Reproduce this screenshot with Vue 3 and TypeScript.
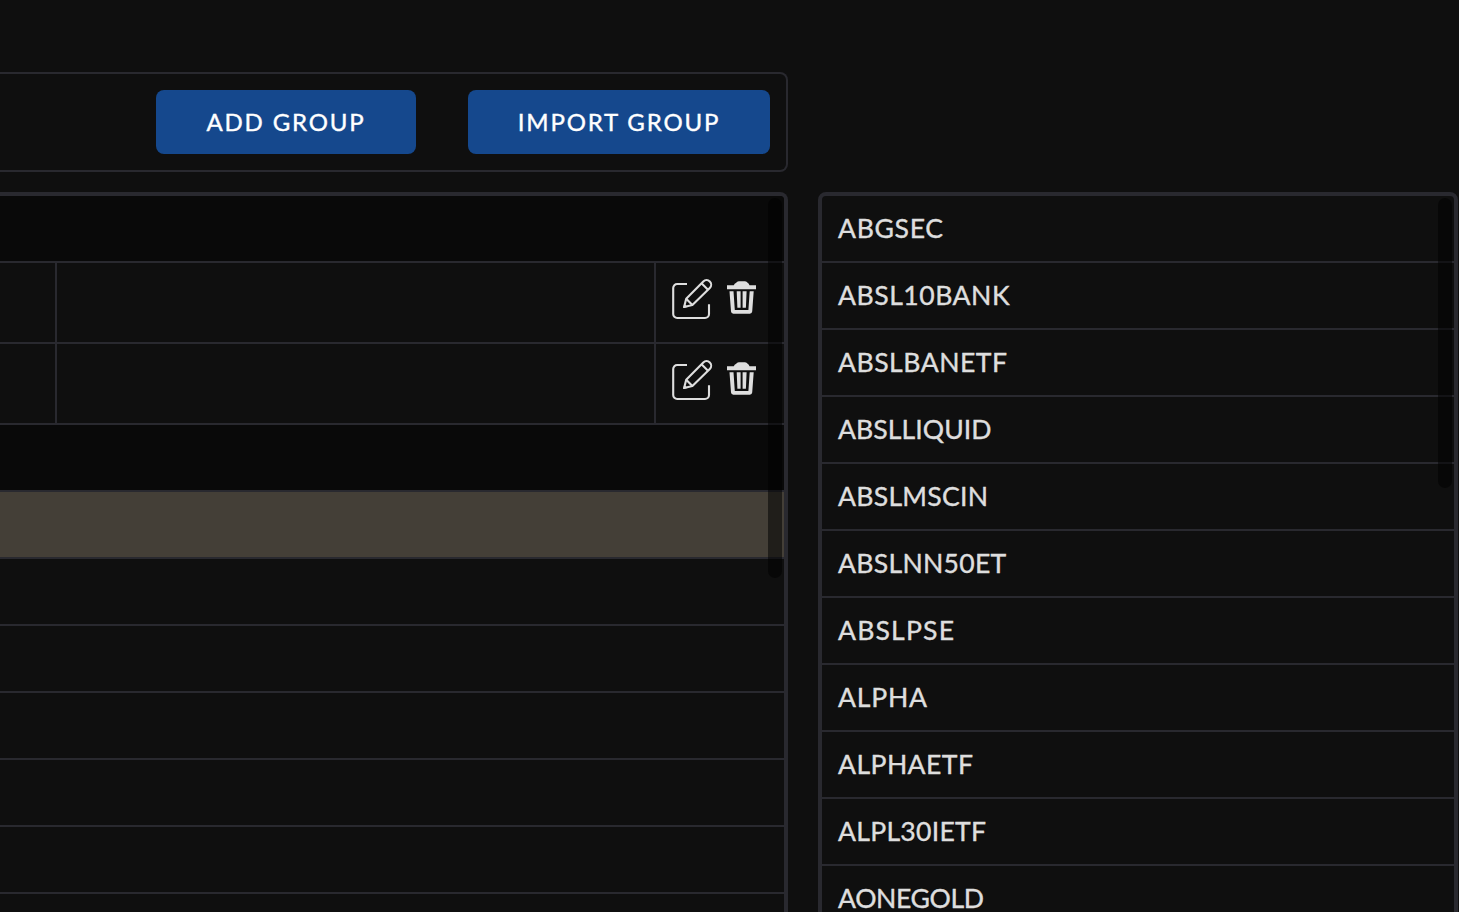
<script setup lang="ts">
interface Item { name: string; width: number }
interface Row { kind: 'header' | 'group' | 'selected' | 'plain' }

const symbols: Item[] = [
  { name: 'ABGSEC', width: 105 },
  { name: 'ABSL10BANK', width: 171.5 },
  { name: 'ABSLBANETF', width: 169 },
  { name: 'ABSLLIQUID', width: 153.5 },
  { name: 'ABSLMSCIN', width: 150 },
  { name: 'ABSLNN50ET', width: 168.3 },
  { name: 'ABSLPSE', width: 116 },
  { name: 'ALPHA', width: 89 },
  { name: 'ALPHAETF', width: 135 },
  { name: 'ALPL30IETF', width: 148 },
  { name: 'AONEGOLD', width: 146 },
]

const rows: Row[] = [
  { kind: 'header' },
  { kind: 'group' },
  { kind: 'group' },
  { kind: 'header' },
  { kind: 'selected' },
  { kind: 'plain' },
  { kind: 'plain' },
  { kind: 'plain' },
  { kind: 'plain' },
  { kind: 'plain' },
  { kind: 'plain' },
]
</script>

<template>
  <main class="page">
    <section class="left">
      <header class="toolbar">
        <button class="btn add">ADD GROUP</button>
        <button class="btn import">IMPORT GROUP</button>
      </header>
      <div class="panel groups">
        <div v-for="(row, i) in rows" :key="i" class="row" :class="row.kind">
          <template v-if="row.kind === 'group'">
            <div class="cell first"></div>
            <div class="cell middle"></div>
            <div class="cell actions">
              <svg class="edit" width="42" height="42" viewBox="0 0 42 42" fill="none" stroke="#dedede" stroke-width="2.1" stroke-linecap="butt" stroke-linejoin="round">
                <path d="M15 6H5.2A4 4 0 0 0 1.2 10V36A4 4 0 0 0 5.2 40H33A4 4 0 0 0 37 36V26.3" />
                <path d="M12.1 29L14.2 20.7L31.3 3.5A4.55 4.55 0 0 1 37.8 10L20.4 27.1Z" />
                <path d="M14.2 20.7L20.4 27.1M29.5 5.3L36 11.8" />
                <path d="M11.2 30.1L12.3 25.6L15.6 28.9Z" fill="#dedede" stroke="none" />
              </svg>
              <svg class="trash" width="29" height="33" viewBox="0 0 29 33" fill="#dedede">
                <path d="M0 4.2H6.8Q7.4 2.4 9.2 1.8Q10 0.2 11.8 0.2H18Q19.8 0.2 20.6 1.8Q22 2.4 22.5 4.2H29V8.2H0Z" />
                <path d="M2.5 10.2H6.5L7.8 28.9H21.4L22.7 10.2H26.7L25.2 30.6Q25 32.7 22.9 32.7H6.3Q4.2 32.7 4 30.6Z" />
                <path d="M9.7 10.2H13.6V26.8H10.4ZM15.6 10.2H19.6L18.9 26.8H15.6Z" />
              </svg>
            </div>
          </template>
        </div>
        <div class="thumb left-thumb"></div>
      </div>
    </section>
    <section class="panel symbols">
      <div v-for="item in symbols" :key="item.name" class="row symbol">
        <svg class="label" width="200" height="32" :aria-label="item.name">
          <text x="0" y="29" :textLength="item.width">{{ item.name }}</text>
        </svg>
      </div>
      <div class="thumb right-thumb"></div>
    </section>
  </main>
</template>

<style>
body { background: #0f0f0f; overflow: hidden; }
</style>

<style scoped>
.page {
  box-sizing: border-box;
  width: 1459px;
  height: 912px;
  padding-top: 72px;
  display: flex;
  align-items: flex-start;
  overflow: hidden;
  background: #0f0f0f;
  color: #dedede;
  font-family: Lato, "Liberation Sans", sans-serif;
}
.left { width: 788px; }
.toolbar {
  box-sizing: border-box;
  height: 100px;
  margin-bottom: 20px;
  padding-right: 16px;
  border: 2px solid #29292f;
  border-left: 0;
  border-radius: 0 8px 8px 0;
  display: flex;
  justify-content: flex-end;
  align-items: center;
  gap: 52px;
}
.btn {
  height: 64px;
  padding: 0;
  border: 0;
  border-radius: 8px;
  background: #15488d;
  color: #fff;
  font: 400 24px/64px Lato, "Liberation Sans", sans-serif;
  letter-spacing: 1.85px;
  white-space: nowrap;
  -webkit-text-stroke: 0.4px #fff;
}
.add { width: 260px; }
.import { width: 302px; }
.panel {
  box-sizing: border-box;
  position: relative;
  height: 740px;
  border: 4px solid #29292f;
  overflow: hidden;
}
.groups { border-left: 0; border-radius: 0 8px 0 0; }
.symbols { width: 640px; margin: 120px 0 0 30px; border-radius: 8px 8px 0 0; }
.row {
  box-sizing: border-box;
  height: 67px;
  border-bottom: 2px solid #29292f;
}
.header { background: #090909; }
.selected { background: #443f37; }
.group { height: 81px; display: flex; }
.cell { box-sizing: border-box; border-right: 2px solid #29292f; }
.first { width: 57px; }
.middle { width: 599px; }
.actions {
  flex: 1;
  display: flex;
  align-items: flex-start;
  gap: 13px;
  padding: 15px 0 0 16px;
  border-right: 0;
}
.trash { margin-top: 3px; }
.symbol { padding: 13px 16px 0; }
.label { display: block; overflow: visible; }
.label text {
  font-size: 26.6px;
  fill: #dedede;
  stroke: #dedede;
  stroke-width: 0.4px;
}
.thumb {
  position: absolute;
  top: 2px;
  right: 2px;
  width: 14px;
  border-radius: 7px;
  background: rgba(0, 0, 0, 0.52);
}
.left-thumb { height: 380px; }
.right-thumb { height: 290px; }
</style>
